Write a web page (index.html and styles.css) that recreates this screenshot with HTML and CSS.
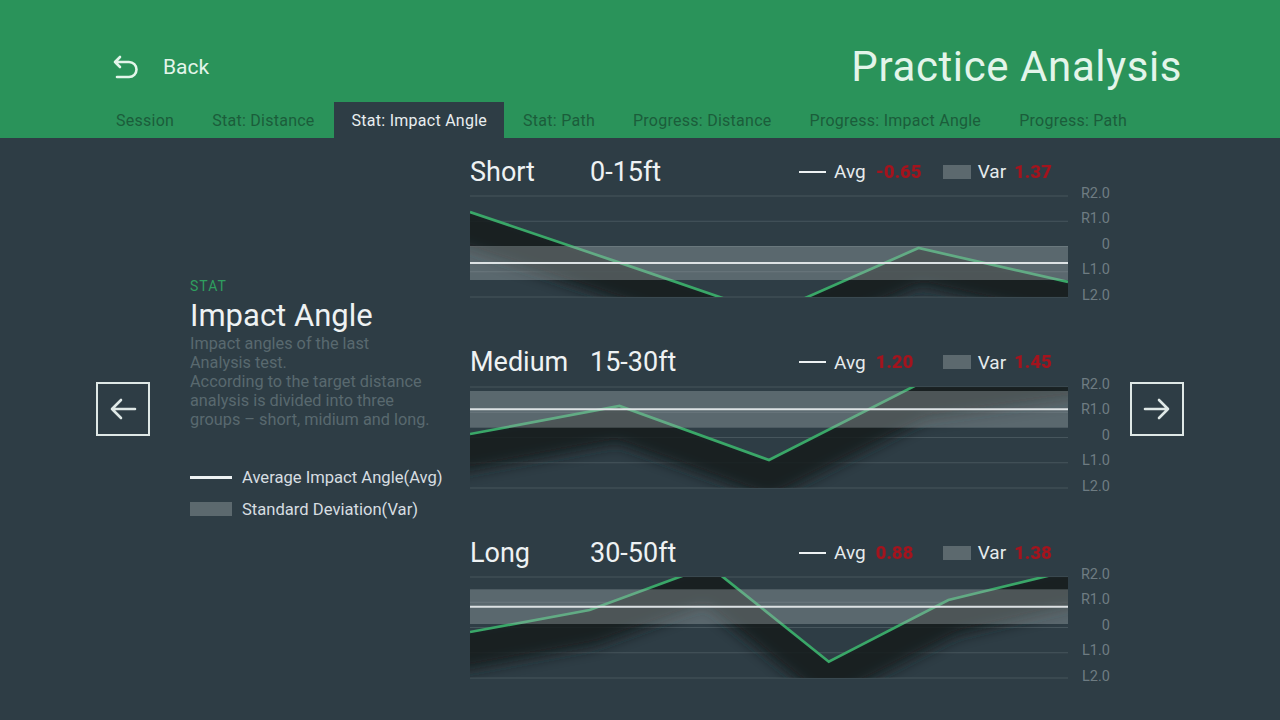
FILE: index.html
```html
<!DOCTYPE html>
<html lang="en">
<head>
<meta charset="utf-8">
<title>Practice Analysis</title>
<link rel="stylesheet" href="styles.css">
</head>
<body>
<header class="topbar">
  <div class="top-row">
    <a class="back">
      <svg class="back-icon" width="28" height="26" viewBox="0 0 28 26"><path d="M8 2 L3 7 L8 12 M3 7 H17 A7.5 7.5 0 0 1 17 22 H5" fill="none" stroke="#e3f5ea" stroke-width="2.6" stroke-linecap="round" stroke-linejoin="round"/></svg>
      <span>Back</span>
    </a>
    <h1 class="page-title">Practice Analysis</h1>
  </div>
  <nav class="tabs">
    <span class="tab">Session</span>
    <span class="tab">Stat: Distance</span>
    <span class="tab active">Stat: Impact Angle</span>
    <span class="tab">Stat: Path</span>
    <span class="tab">Progress: Distance</span>
    <span class="tab">Progress: Impact Angle</span>
    <span class="tab">Progress: Path</span>
  </nav>
</header>
<main class="main">
  <button class="nav-btn">
    <svg width="30" height="26" viewBox="0 0 30 26"><path d="M27 13 H4 M13 4 L4 13 L13 22" fill="none" stroke="#dfe8e6" stroke-width="2.6" stroke-linecap="round" stroke-linejoin="round"/></svg>
  </button>
  <section class="info">
    <div class="info-kicker">STAT</div>
    <h2 class="info-title">Impact Angle</h2>
    <p class="info-desc">Impact angles of the last<br>Analysis test.<br>According to the target distance<br>analysis is divided into three<br>groups – short, midium and long.</p>
    <div class="legend">
      <div class="legend-row"><span class="legend-line"></span><span>Average Impact Angle(Avg)</span></div>
      <div class="legend-row"><span class="legend-box"></span><span>Standard Deviation(Var)</span></div>
    </div>
  </section>
  <section class="charts">
    <svg class="defs" width="0" height="0">
      <defs>
        <filter id="soft" x="-20%" y="-100%" width="140%" height="300%"><feGaussianBlur stdDeviation="7"/></filter>
        <clipPath id="plot"><rect x="0" y="0" width="598" height="101"/></clipPath>
        <clipPath id="below-s"><polygon points="0,16 149.5,66.6 299,118 448.5,52 598,86 598,220 0,220"/></clipPath>
        <clipPath id="below-m"><polygon points="0,47 149.5,19 299,73 448.5,-3 598,-25 598,220 0,220"/></clipPath>
        <clipPath id="below-l"><polygon points="0,55 119.6,33 239.2,-11 358.8,84.7 478.4,23 598,-6 598,220 0,220"/></clipPath>
      </defs>
    </svg>

    <div class="chart">
      <div class="chart-head">
        <span class="chart-name">Short</span>
        <span class="chart-range">0-15ft</span>
        <span class="lg-line"></span><span class="lg-label">Avg</span><span class="lg-val first">-0.65</span>
        <span class="lg-box"></span><span class="lg-label var">Var</span><span class="lg-val">1.37</span>
      </div>
      <svg class="plot-svg" width="640" height="122" viewBox="0 -12 640 122">
        <g class="grid">
          <line x1="0" y1="0" x2="598" y2="0"/><line x1="0" y1="25.25" x2="598" y2="25.25"/><line x1="0" y1="50.5" x2="598" y2="50.5"/><line x1="0" y1="75.75" x2="598" y2="75.75"/><line x1="0" y1="101" x2="598" y2="101"/>
        </g>
        <g class="axis">
          <text x="640" y="-2.5">R2.0</text><text x="640" y="22.5">R1.0</text><text x="640" y="48">0</text><text x="640" y="73.5">L1.0</text><text x="640" y="99">L2.0</text>
        </g>
        <g clip-path="url(#plot)">
          <g clip-path="url(#below-s)"><polyline class="shade" points="0,16 149.5,66.6 299,118 448.5,52 598,86" transform="translate(0,14)" filter="url(#soft)"/></g>
          <polyline class="trend" points="0,16 149.5,66.6 299,118 448.5,52 598,86"/>
          <rect class="band" x="0" y="50" width="598" height="34"/>
          <line class="avg" x1="0" y1="67" x2="598" y2="67"/>
        </g>
      </svg>
    </div>

    <div class="chart">
      <div class="chart-head">
        <span class="chart-name">Medium</span>
        <span class="chart-range">15-30ft</span>
        <span class="lg-line"></span><span class="lg-label">Avg</span><span class="lg-val first">1.20</span>
        <span class="lg-box"></span><span class="lg-label var">Var</span><span class="lg-val">1.45</span>
      </div>
      <svg class="plot-svg" width="640" height="122" viewBox="0 -12 640 122">
        <g class="grid">
          <line x1="0" y1="0" x2="598" y2="0"/><line x1="0" y1="25.25" x2="598" y2="25.25"/><line x1="0" y1="50.5" x2="598" y2="50.5"/><line x1="0" y1="75.75" x2="598" y2="75.75"/><line x1="0" y1="101" x2="598" y2="101"/>
        </g>
        <g class="axis">
          <text x="640" y="-2.5">R2.0</text><text x="640" y="22.5">R1.0</text><text x="640" y="48">0</text><text x="640" y="73.5">L1.0</text><text x="640" y="99">L2.0</text>
        </g>
        <g clip-path="url(#plot)">
          <g clip-path="url(#below-m)"><polyline class="shade" points="0,47 149.5,19 299,73 448.5,-3 598,-25" transform="translate(0,14)" filter="url(#soft)"/></g>
          <polyline class="trend" points="0,47 149.5,19 299,73 448.5,-3 598,-25"/>
          <rect class="band" x="0" y="4" width="598" height="36.7"/>
          <line class="avg" x1="0" y1="22.3" x2="598" y2="22.3"/>
        </g>
      </svg>
    </div>

    <div class="chart">
      <div class="chart-head">
        <span class="chart-name">Long</span>
        <span class="chart-range">30-50ft</span>
        <span class="lg-line"></span><span class="lg-label">Avg</span><span class="lg-val first">0.88</span>
        <span class="lg-box"></span><span class="lg-label var">Var</span><span class="lg-val">1.38</span>
      </div>
      <svg class="plot-svg" width="640" height="122" viewBox="0 -12 640 122">
        <g class="grid">
          <line x1="0" y1="0" x2="598" y2="0"/><line x1="0" y1="25.25" x2="598" y2="25.25"/><line x1="0" y1="50.5" x2="598" y2="50.5"/><line x1="0" y1="75.75" x2="598" y2="75.75"/><line x1="0" y1="101" x2="598" y2="101"/>
        </g>
        <g class="axis">
          <text x="640" y="-2.5">R2.0</text><text x="640" y="22.5">R1.0</text><text x="640" y="48">0</text><text x="640" y="73.5">L1.0</text><text x="640" y="99">L2.0</text>
        </g>
        <g clip-path="url(#plot)">
          <g clip-path="url(#below-l)"><polyline class="shade" points="0,55 119.6,33 239.2,-11 358.8,84.7 478.4,23 598,-6" transform="translate(0,14)" filter="url(#soft)"/></g>
          <polyline class="trend" points="0,55 119.6,33 239.2,-11 358.8,84.7 478.4,23 598,-6"/>
          <rect class="band" x="0" y="12.3" width="598" height="34.7"/>
          <line class="avg" x1="0" y1="29.7" x2="598" y2="29.7"/>
        </g>
      </svg>
    </div>
  </section>
  <button class="nav-btn right">
    <svg width="30" height="26" viewBox="0 0 30 26"><path d="M3 13 H26 M17 4 L26 13 L17 22" fill="none" stroke="#dfe8e6" stroke-width="2.6" stroke-linecap="round" stroke-linejoin="round"/></svg>
  </button>
</main>
</body>
</html>
```

FILE: styles.css
```css
* { box-sizing: border-box; }

html, body {
  margin: 0;
  padding: 0;
}

body {
  width: 1280px;
  height: 720px;
  overflow: hidden;
  background: #2e3d45;
  font-family: Roboto, "Open Sans", sans-serif;
  color: #e9eef0;
}

/* ---------- header ---------- */
.topbar {
  height: 138px;
  background: #2a935a;
  display: flex;
  flex-direction: column;
}

.top-row {
  height: 102px;
  padding: 32px 98px 0 112px;
  display: flex;
  align-items: center;
  justify-content: space-between;
}

.back {
  display: flex;
  align-items: center;
  gap: 23px;
  color: #e3f5ea;
  font-size: 21px;
  cursor: pointer;
}

.back-icon { display: block; margin-top: 1px; }

.page-title {
  margin: 0;
  font-weight: 400;
  font-size: 42px;
  letter-spacing: 0.6px;
  color: #e3f5ea;
  line-height: 1;
}

.tabs {
  height: 36px;
  padding-left: 97px;
  display: flex;
  align-items: stretch;
}

.tab {
  display: flex;
  align-items: center;
  padding: 0 19px;
  font-size: 16px;
  letter-spacing: 0.26px;
  color: #1b5d3a;
}

.tab.active {
  background: #2e3d45;
  color: #e9eef0;
  padding: 0 17px 0 18px;
}

/* ---------- main ---------- */
.main {
  height: 582px;
  padding: 0 0 40px 96px;
  display: flex;
  align-items: center;
}

.nav-btn {
  width: 54px;
  height: 54px;
  flex: none;
  border: 2px solid #dfe8e6;
  background: transparent;
  padding: 0;
  display: flex;
  align-items: center;
  justify-content: center;
}

.nav-btn.right { margin-left: 20px; }

.info {
  width: 280px;
  margin-left: 40px;
  margin-bottom: 21px;
}

.info-kicker {
  font-size: 14px;
  line-height: 16px;
  letter-spacing: 1px;
  color: #2f9f5f;
}

.info-title {
  margin: 4px 0 0;
  font-size: 31px;
  line-height: 36px;
  font-weight: 400;
  color: #eef2f3;
}

.info-desc {
  margin: 0;
  font-size: 16.3px;
  line-height: 19px;
  color: #59696f;
}

.legend {
  margin-top: 38px;
  display: flex;
  flex-direction: column;
  gap: 12px;
}

.legend-row {
  height: 20px;
  display: flex;
  align-items: center;
  gap: 10px;
  font-size: 16.6px;
  color: #d7dee1;
}

.legend-line {
  width: 42px;
  height: 3px;
  background: #eef2f3;
}

.legend-box {
  width: 42px;
  height: 14px;
  background: #5c696e;
}

/* ---------- charts ---------- */
.charts {
  align-self: flex-start;
  width: 640px;
  padding-top: 17px;
  display: flex;
  flex-direction: column;
  gap: 39.5px;
}

.defs { position: absolute; }

.chart-head {
  height: 29px;
  padding-top: 4px;
  display: flex;
  align-items: center;
}

.chart-name {
  width: 120px;
  font-size: 27px;
  color: #eef2f3;
}

.chart-range {
  width: 209px;
  font-size: 27px;
  color: #eef2f3;
}

.lg-line {
  width: 27px;
  height: 2px;
  background: #eef2f3;
  margin-right: 8px;
}

.lg-box {
  width: 28px;
  height: 14px;
  background: #5c696e;
  margin-right: 7px;
}

.lg-label {
  font-size: 19px;
  color: #e6ebed;
  margin-right: 10px;
}

.lg-label.var { margin-right: 8px; }

.lg-val {
  font-size: 18.5px;
  font-weight: 900;
  color: #a3141e;
  filter: blur(0.6px);
}

.lg-val.first {
  width: 67px;
}

.plot-svg { display: block; }

.grid line {
  stroke: #47565d;
  stroke-width: 1;
}

.axis text {
  font-family: Roboto, sans-serif;
  font-size: 14.5px;
  fill: #6e7c82;
  text-anchor: end;
  dominant-baseline: central;
}

.shade {
  fill: none;
  stroke: #141b1e;
  stroke-width: 46;
  stroke-linejoin: round;
  stroke-linecap: square;
  opacity: 0.85;
}

.trend {
  fill: none;
  stroke: #3aa768;
  stroke-width: 2.7;
  stroke-linejoin: miter;
}

.band {
  fill: rgba(170, 180, 184, 0.36);
}

.avg {
  stroke: #dde2e4;
  stroke-width: 2;
}
```
